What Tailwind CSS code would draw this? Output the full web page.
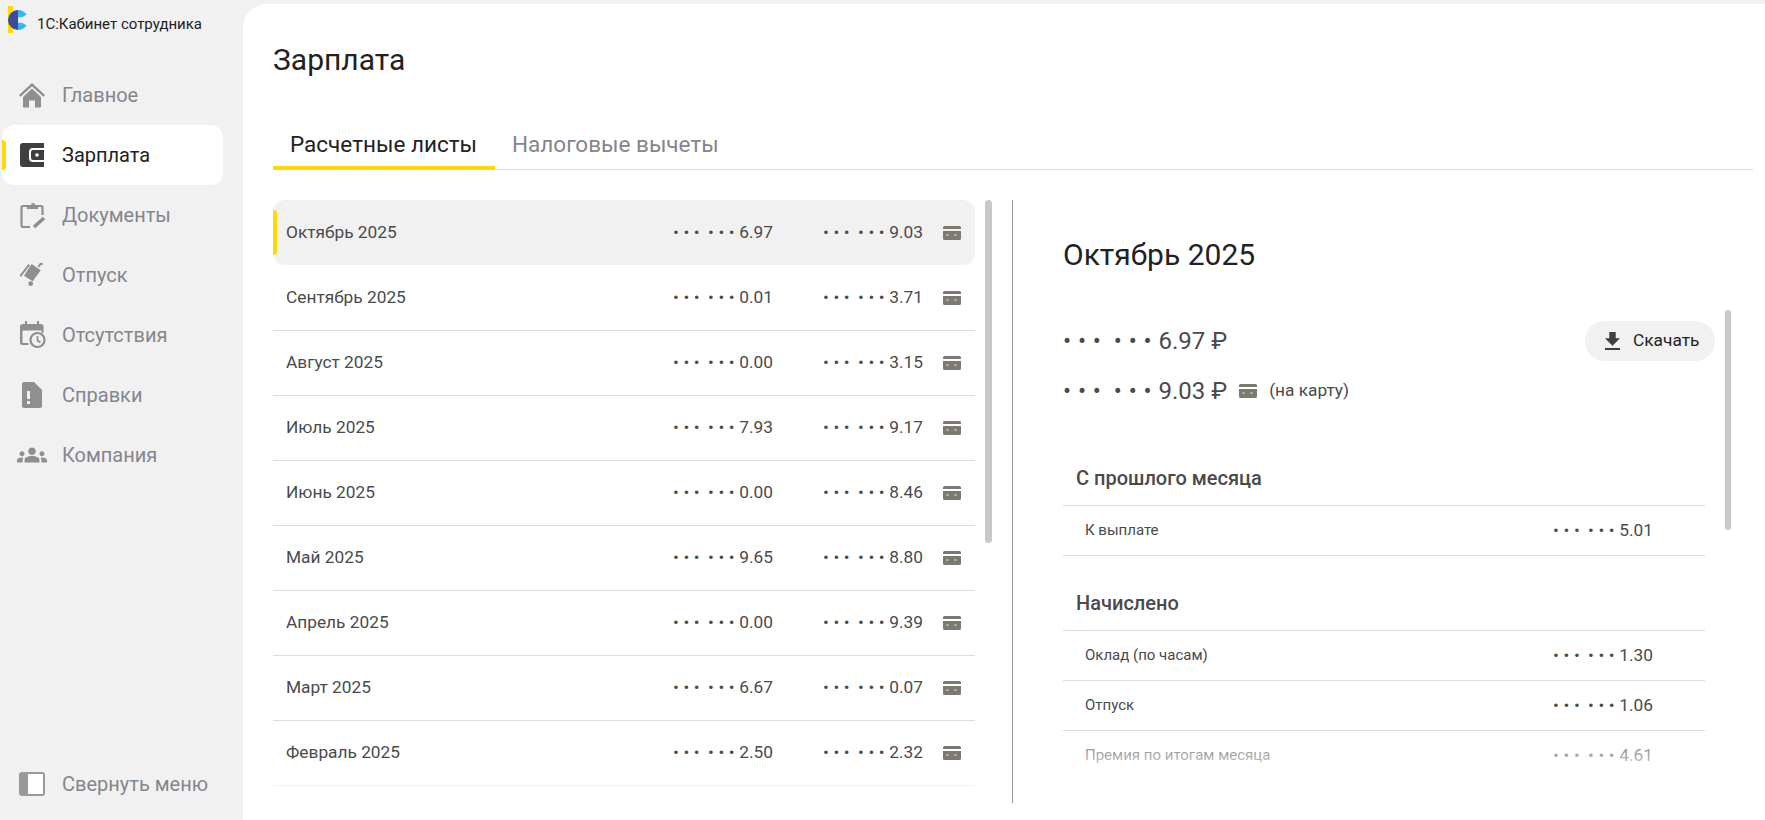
<!DOCTYPE html>
<html lang="ru">
<head>
    <meta charset="UTF-8">
    <title>1С:Кабинет сотрудника</title>
    <script src="https://cdn.jsdelivr.net/npm/@tailwindcss/browser@4"></script>
</head>
<body class="h-[820px] overflow-hidden bg-[#f1f1f1] font-['Roboto',sans-serif]">
<svg class="hidden">
    <symbol id="card" viewBox="0 0 18 14">
        <path fill="#7b7972" d="M1.500 0h15A1.500 1.500 0 0 1 18 1.500V3H0V1.500A1.500 1.500 0 0 1 1.500 0zM0 5h18v7.500a1.500 1.500 0 0 1-1.500 1.500h-15A1.500 1.500 0 0 1 0 12.500z"/>
        <path fill="#d8d8d4" d="M3 8.500h3v1H3zM11 8.500h3v1h-3z"/>
    </symbol>
</svg>
<div class="flex h-full pt-1">
    <!-- sidebar -->
    <aside class="w-[243px] shrink-0 flex flex-col -mt-1">
        <div class="flex items-center h-[40px] pl-2">
            <svg class="w-5 h-[27px] -mt-[1px]" viewBox="0 0 20 27">
                <rect x="0" y="0" width="5" height="27" fill="#ffd900"/>
                <path fill="#38b6f1" d="M10 4c3.500 0 6.700 1.800 8.700 4.500L14 11.300h-4v5.400h4l4.700 2.800C16.700 22.200 13.500 24 10 24z"/>
                <path fill="#3a4a9c" d="M10 4a10 10 0 0 0 0 20z"/>
            </svg>
            <span class="ml-[9px] mt-2 text-[15px] text-[#222]">1С:Кабинет сотрудника</span>
        </div>
        <nav class="mt-[25px] text-[20px] text-[#85858d]">
            <a class="flex items-center h-[60px] pl-[62px] relative">
                <svg class="absolute left-[19px] w-[26px] h-[26px]" viewBox="0 0 26 26" fill="#8f8f8f"><path d="M13 1 0 13l1.600 1.700L13 4.200l11.400 10.500L26 13z"/><path d="M13 6.500 4 15v9.500a1 1 0 0 0 1 1h5v-7h6v7h5a1 1 0 0 0 1-1V15z"/></svg>
                Главное
            </a>
            <a class="flex items-center h-[60px] pl-[60px] ml-0.5 w-[221px] bg-white rounded-xl text-[#222] relative">
                <span class="absolute left-0 top-[15px] w-1 h-[30px] bg-[#ffd900] rounded-r-sm"></span>
                <svg class="absolute left-[18px] w-6 h-6" viewBox="0 0 24 24"><path fill="#3f3f3f" d="M3 0h21v5H13a4 4 0 0 0-4 4v6a4 4 0 0 0 4 4h11v5H3a3 3 0 0 1-3-3V3a3 3 0 0 1 3-3z"/><path fill="#3f3f3f" d="M13 7h11v10H13a2 2 0 0 1-2-2V9a2 2 0 0 1 2-2z"/><circle cx="17" cy="12" r="1.800" fill="#fff"/></svg>
                Зарплата
            </a>
            <a class="flex items-center h-[60px] pl-[62px] relative">
                <svg class="absolute left-[20px] w-[26px] h-[26px]" viewBox="0 0 26 26" fill="none" stroke="#8f8f8f" stroke-width="2.200"><path d="M7 4H3a1.500 1.500 0 0 0-1.500 1.500v18A1.500 1.500 0 0 0 3 25h7M17 4h4a1.500 1.500 0 0 1 1.500 1.500V13"/><path d="M7 3h4a2 2 0 0 1 4 0h3v4H7z" fill="#8f8f8f" stroke="none"/><path d="M14 25l10-9" stroke-width="3.500"/></svg>
                Документы
            </a>
            <a class="flex items-center h-[60px] pl-[62px] relative">
                <svg class="absolute left-[20px] w-6 h-6" viewBox="0 0 24 24"><path fill="#8f8f8f" d="M11.700 1l9 6.300-8 11L4 12.700z"/><path d="M0 13.300 9.300 1.700M18.300 4l2.400-3.300 2 .3" fill="none" stroke="#8f8f8f" stroke-width="2"/><circle cx="10.700" cy="20.700" r="2.400" fill="#8f8f8f"/></svg>
                Отпуск
            </a>
            <a class="flex items-center h-[60px] pl-[62px] relative">
                <svg class="absolute left-[20px] w-[26px] h-[28px]" viewBox="0 0 26 28"><path fill="#8f8f8f" d="M5 0h2v3h10V0h2v3h2a2.500 2.500 0 0 1 2.500 2.500V12h-2V9.500h-19V22h6v2h-6A2.500 2.500 0 0 1 0 21.500v-16A2.500 2.500 0 0 1 2.500 3H5z"/><circle cx="17.500" cy="19" r="7" fill="none" stroke="#8f8f8f" stroke-width="2.200"/><path d="M17.500 15v4.500l3 2" fill="none" stroke="#8f8f8f" stroke-width="1.800"/></svg>
                Отсутствия
            </a>
            <a class="flex items-center h-[60px] pl-[62px] relative">
                <svg class="absolute left-[22px] w-5 h-[26px]" viewBox="0 0 20 26"><path fill="#8f8f8f" d="M2 0h10l8 8v16a2 2 0 0 1-2 2H2a2 2 0 0 1-2-2V2a2 2 0 0 1 2-2z"/><path fill="#f1f1f1" d="M5 9h3v8H5zM5 19h3v3H5z"/></svg>
                Справки
            </a>
            <a class="flex items-center h-[60px] pl-[62px] relative">
                <svg class="absolute left-[17px] w-[30px] h-[30px]" viewBox="0 0 24 24" fill="#8f8f8f"><path d="M12 12.750c1.630 0 3.070.39 4.240.9 1.080.48 1.760 1.560 1.760 2.730V18H6v-1.610c0-1.180.68-2.260 1.760-2.730 1.170-.52 2.610-.91 4.240-.91zM4 13c1.100 0 2-.9 2-2s-.9-2-2-2-2 .9-2 2 .9 2 2 2zm1.130 1.100c-.37-.06-.74-.1-1.130-.1-.99 0-1.930.21-2.780.58C.48 14.900 0 15.620 0 16.430V18h4.500v-1.610c0-.83.23-1.610.63-2.290zM20 13c1.100 0 2-.9 2-2s-.9-2-2-2-2 .9-2 2 .9 2 2 2zm4 3.430c0-.81-.48-1.530-1.220-1.850-.85-.37-1.790-.58-2.780-.58-.39 0-.76.04-1.130.1.4.68.63 1.460.63 2.290V18H24v-1.570zM12 6c1.660 0 3 1.340 3 3s-1.340 3-3 3-3-1.340-3-3 1.340-3 3-3z"/></svg>
                Компания
            </a>
        </nav>
        <a class="mt-auto mb-[6px] flex items-center h-[60px] pl-[62px] relative text-[20px] text-[#85858d]">
            <svg class="absolute left-[19px] w-[26px] h-6" viewBox="0 0 26 24"><rect x="1" y="1" width="24" height="22" rx="2" fill="#fff" stroke="#999" stroke-width="2"/><rect x="1" y="1" width="8" height="22" fill="#999"/></svg>
            Свернуть меню
        </a>
    </aside>

    <!-- main panel -->
    <main class="flex-1 min-w-0 bg-white rounded-tl-[24px] pl-[30px] pr-3 overflow-hidden">
        <h1 class="pt-[39px] text-[30px] leading-[34px] text-[#222]">Зарплата</h1>

        <div class="mt-[56px] flex h-[37px] border-b border-[#dcdcdc] text-[22.500px] leading-[23px]">
            <div class="w-[222px] h-[37px] pl-[17px] border-b-4 border-[#ffd900] rounded-b-[2px] text-[#222]">Расчетные листы</div>
            <div class="pl-[17px] text-[#85858d]">Налоговые вычеты</div>
        </div>

        <div class="flex mt-[30px]">
            <!-- payslip list -->
            <div class="w-[702px] shrink-0 text-[17.300px] text-[#4a4a4a]">
                <div class="relative flex items-center h-[65px] pt-px pl-[13px] pr-[14px] bg-[#f1f1f1] rounded-xl">
                    <span class="absolute left-0 top-[10px] w-1 h-[45px] bg-[#ffd900] rounded-r-sm"></span>
                    <span class="flex-1">Октябрь 2025</span>
                    <span class="w-[150px]"><span class="tracking-[4.600px] [word-spacing:-5.200px]">••• •••</span>6.97</span>
                    <span class="w-[120px]"><span class="tracking-[4.600px] [word-spacing:-5.200px]">••• •••</span>9.03</span>
                    <svg class="w-[18px] h-[14px]"><use href="#card"/></svg>
                </div>
                <div class="flex items-center h-[65px] mt-px pl-[13px] pr-[14px] border-b border-[#dcdcdc]">
                    <span class="flex-1">Сентябрь 2025</span>
                    <span class="w-[150px]"><span class="tracking-[4.600px] [word-spacing:-5.200px]">••• •••</span>0.01</span>
                    <span class="w-[120px]"><span class="tracking-[4.600px] [word-spacing:-5.200px]">••• •••</span>3.71</span>
                    <svg class="w-[18px] h-[14px]"><use href="#card"/></svg>
                </div>
                <div class="flex items-center h-[65px] pl-[13px] pr-[14px] border-b border-[#dcdcdc]">
                    <span class="flex-1">Август 2025</span>
                    <span class="w-[150px]"><span class="tracking-[4.600px] [word-spacing:-5.200px]">••• •••</span>0.00</span>
                    <span class="w-[120px]"><span class="tracking-[4.600px] [word-spacing:-5.200px]">••• •••</span>3.15</span>
                    <svg class="w-[18px] h-[14px]"><use href="#card"/></svg>
                </div>
                <div class="flex items-center h-[65px] pl-[13px] pr-[14px] border-b border-[#dcdcdc]">
                    <span class="flex-1">Июль 2025</span>
                    <span class="w-[150px]"><span class="tracking-[4.600px] [word-spacing:-5.200px]">••• •••</span>7.93</span>
                    <span class="w-[120px]"><span class="tracking-[4.600px] [word-spacing:-5.200px]">••• •••</span>9.17</span>
                    <svg class="w-[18px] h-[14px]"><use href="#card"/></svg>
                </div>
                <div class="flex items-center h-[65px] pl-[13px] pr-[14px] border-b border-[#dcdcdc]">
                    <span class="flex-1">Июнь 2025</span>
                    <span class="w-[150px]"><span class="tracking-[4.600px] [word-spacing:-5.200px]">••• •••</span>0.00</span>
                    <span class="w-[120px]"><span class="tracking-[4.600px] [word-spacing:-5.200px]">••• •••</span>8.46</span>
                    <svg class="w-[18px] h-[14px]"><use href="#card"/></svg>
                </div>
                <div class="flex items-center h-[65px] pl-[13px] pr-[14px] border-b border-[#dcdcdc]">
                    <span class="flex-1">Май 2025</span>
                    <span class="w-[150px]"><span class="tracking-[4.600px] [word-spacing:-5.200px]">••• •••</span>9.65</span>
                    <span class="w-[120px]"><span class="tracking-[4.600px] [word-spacing:-5.200px]">••• •••</span>8.80</span>
                    <svg class="w-[18px] h-[14px]"><use href="#card"/></svg>
                </div>
                <div class="flex items-center h-[65px] pl-[13px] pr-[14px] border-b border-[#dcdcdc]">
                    <span class="flex-1">Апрель 2025</span>
                    <span class="w-[150px]"><span class="tracking-[4.600px] [word-spacing:-5.200px]">••• •••</span>0.00</span>
                    <span class="w-[120px]"><span class="tracking-[4.600px] [word-spacing:-5.200px]">••• •••</span>9.39</span>
                    <svg class="w-[18px] h-[14px]"><use href="#card"/></svg>
                </div>
                <div class="flex items-center h-[65px] pl-[13px] pr-[14px] border-b border-[#dcdcdc]">
                    <span class="flex-1">Март 2025</span>
                    <span class="w-[150px]"><span class="tracking-[4.600px] [word-spacing:-5.200px]">••• •••</span>6.67</span>
                    <span class="w-[120px]"><span class="tracking-[4.600px] [word-spacing:-5.200px]">••• •••</span>0.07</span>
                    <svg class="w-[18px] h-[14px]"><use href="#card"/></svg>
                </div>
                <div class="flex items-center h-[65px] pl-[13px] pr-[14px] border-b border-[#f0f0f0]">
                    <span class="flex-1">Февраль 2025</span>
                    <span class="w-[150px]"><span class="tracking-[4.600px] [word-spacing:-5.200px]">••• •••</span>2.50</span>
                    <span class="w-[120px]"><span class="tracking-[4.600px] [word-spacing:-5.200px]">••• •••</span>2.32</span>
                    <svg class="w-[18px] h-[14px]"><use href="#card"/></svg>
                </div>
            </div>

            <div class="ml-[10px] w-[7px] h-[343px] bg-[#c8c8c8] rounded-[4px]"></div>
            <div class="ml-5 w-px h-[603px] bg-[#999]"></div>

            <!-- payslip detail -->
            <div class="relative flex-1 min-w-0 pl-[50px] pr-[48px]">
                <h2 class="pt-[37px] text-[30px] leading-[36px] text-[#222]">Октябрь 2025</h2>
                <div class="absolute right-[22px] top-[110px] w-[6px] h-[220px] bg-[#c8c8c8] rounded-[3px]"></div>

                <div class="flex items-center justify-between mt-[48px] h-[40px] text-[24px] text-[#4a4a4a]">
                    <span><span class="tracking-[6.800px] [word-spacing:-6.700px]">••• •••</span>6.97 ₽</span>
                    <a class="flex items-center w-[130px] h-10 pl-5 mr-[-10px] bg-[#f1f1f1] rounded-[20px] text-[17.300px] text-[#222]">
                        <svg class="w-[15px] h-[18px] mr-[13px]" viewBox="5 3 14 17" fill="#3f3f3f" preserveAspectRatio="none"><path d="M5 20h14v-2H5v2zM19 9h-4V3H9v6H5l7 7 7-7z"/></svg>
                        Скачать
                    </a>
                </div>
                <div class="flex items-center mt-[10px] h-[40px] text-[24px] text-[#4a4a4a]">
                    <span><span class="tracking-[6.800px] [word-spacing:-6.700px]">••• •••</span>9.03 ₽</span>
                    <svg class="w-[18px] h-[14px] ml-[12px]"><use href="#card"/></svg>
                    <span class="ml-[12px] text-[17.300px]">(на карту)</span>
                </div>

                <div class="relative h-[380px] overflow-hidden">
                    <div class="flex items-center h-[50px] mt-[45px] pb-[5px] pl-[13px] border-b border-[#dcdcdc] text-[20px] font-medium text-[#4a4a4a]">С прошлого месяца</div>
                    <div class="flex items-center justify-between h-[50px] pl-[22px] pr-[52px] border-b border-[#dcdcdc] text-[15px] text-[#4a4a4a]">
                        <span>К выплате</span>
                        <span class="text-[17.300px]"><span class="tracking-[4.600px] [word-spacing:-5.200px]">••• •••</span>5.01</span>
                    </div>
                    <div class="flex items-center h-[50px] mt-[25px] pb-[5px] pl-[13px] border-b border-[#dcdcdc] text-[20px] font-medium text-[#4a4a4a]">Начислено</div>
                    <div class="flex items-center justify-between h-[50px] pl-[22px] pr-[52px] border-b border-[#dcdcdc] text-[15px] text-[#4a4a4a]">
                        <span>Оклад (по часам)</span>
                        <span class="text-[17.300px]"><span class="tracking-[4.600px] [word-spacing:-5.200px]">••• •••</span>1.30</span>
                    </div>
                    <div class="flex items-center justify-between h-[50px] pl-[22px] pr-[52px] border-b border-[#dcdcdc] text-[15px] text-[#4a4a4a]">
                        <span>Отпуск</span>
                        <span class="text-[17.300px]"><span class="tracking-[4.600px] [word-spacing:-5.200px]">••• •••</span>1.06</span>
                    </div>
                    <div class="flex items-center justify-between h-[50px] pl-[22px] pr-[52px] border-b border-[#dcdcdc] text-[15px] text-[#4a4a4a]">
                        <span>Премия по итогам месяца</span>
                        <span class="text-[17.300px]"><span class="tracking-[4.600px] [word-spacing:-5.200px]">••• •••</span>4.61</span>
                    </div>
                    <div class="absolute left-0 right-0 top-[320px] h-[52px] bg-gradient-to-b from-white/10 to-white"></div>
                </div>
            </div>
        </div>
    </main>
</div>
</body>
</html>
